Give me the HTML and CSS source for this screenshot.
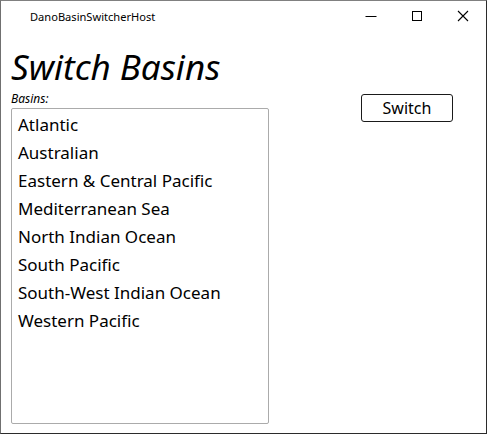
FILE: index.html
```html
<!DOCTYPE html>
<html>
<head>
<meta charset="utf-8">
<link rel="stylesheet" href="styles.css">
</head>
<body>
<div class="window">
  <div class="titlebar">
    <span class="title">DanoBasinSwitcherHost</span>
    <div class="controls">
      <span class="ctl"><svg width="12" height="12" viewBox="0 0 12 12"><path d="M0.5 6.5H11.5" stroke="#000" stroke-width="1"/></svg></span>
      <span class="ctl"><svg width="12" height="12" viewBox="0 0 12 12"><rect x="1.5" y="1.5" width="9" height="9" fill="none" stroke="#000" stroke-width="1"/></svg></span>
      <span class="ctl"><svg width="12" height="12" viewBox="0 0 12 12"><path d="M1 1L11 11M11 1L1 11" stroke="#000" stroke-width="1.1"/></svg></span>
    </div>
  </div>
  <div class="content">
    <div class="left">
      <h1 class="heading">Switch Basins</h1>
      <div class="label">Basins:</div>
      <ul class="list">
        <li>Atlantic</li>
        <li>Australian</li>
        <li>Eastern &amp; Central Pacific</li>
        <li>Mediterranean Sea</li>
        <li>North Indian Ocean</li>
        <li>South Pacific</li>
        <li>South-West Indian Ocean</li>
        <li>Western Pacific</li>
      </ul>
    </div>
    <div class="right">
      <button class="btn">Switch</button>
    </div>
  </div>
</div>
</body>
</html>
```
FILE: styles.css
```css
html, body {
  margin: 0;
  padding: 0;
  background: #fff;
}
.window {
  box-sizing: border-box;
  width: 487px;
  height: 434px;
  border: 1px solid #2b2b2b;
  border-top-color: #808080;
  border-left-color: #707070;
  display: flex;
  flex-direction: column;
  font-family: "Noto Sans", sans-serif;
  color: #000;
  background: #fff;
}
.titlebar {
  height: 30px;
  display: flex;
  align-items: center;
  justify-content: space-between;
  flex: none;
}
.title {
  font-size: 11.1px;
  padding-left: 29px;
}
.controls {
  display: flex;
  height: 30px;
}
.ctl {
  width: 46px;
  height: 30px;
  display: flex;
  align-items: center;
  justify-content: center;
}
.content {
  flex: 1;
  display: flex;
  padding: 0 0 9px 10px;
  min-height: 0;
}
.left {
  width: 258px;
  display: flex;
  flex-direction: column;
}
.heading {
  margin: 0;
  font-size: 35px;
  font-style: italic;
  font-weight: normal;
  line-height: 44px;
  margin-top: 14px;
  height: 44px;
}
.label {
  font-size: 12px;
  font-style: italic;
  line-height: 16px;
  margin-top: 2px;
  margin-bottom: 1px;
}
.list {
  flex: 1;
  margin: 0;
  padding: 2px 0 0 6px;
  list-style: none;
  border: 1px solid #ababab;
  border-radius: 2px;
}
.list li {
  font-size: 17px;
  line-height: 28px;
  height: 28px;
}
.right {
  padding-left: 92px;
  padding-top: 63px;
}
.btn {
  width: 92px;
  height: 28px;
  box-sizing: border-box;
  border: 1px solid #1a1a1a;
  border-radius: 3px;
  background: #fff;
  font-family: "Noto Sans", sans-serif;
  font-size: 16px;
  padding: 0;
  color: #000;
}
```
